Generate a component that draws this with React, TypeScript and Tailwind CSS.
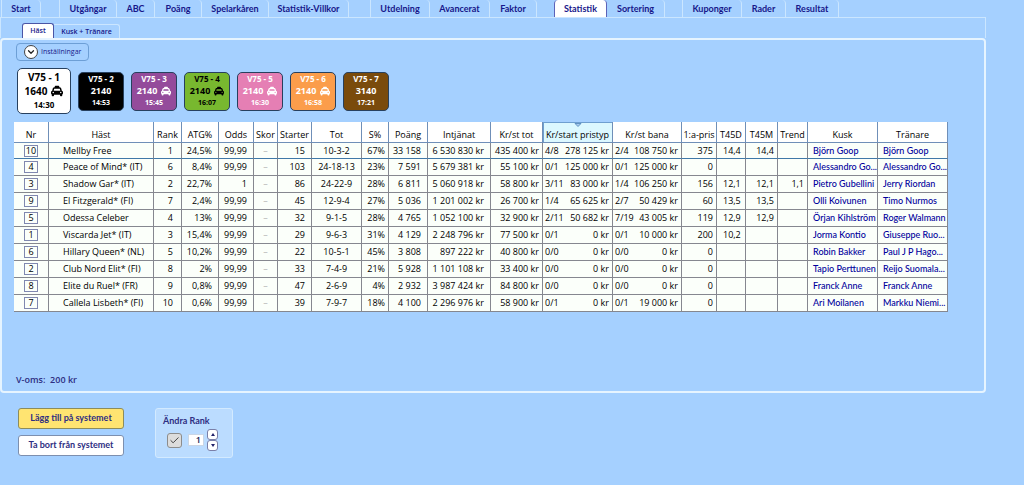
import { useState } from 'react';
import clsx from 'clsx';
import { Check, ChevronDown } from 'lucide-react';
import { FaTaxi } from 'react-icons/fa';

const TAB_GROUPS = [
  { gap: 'ml-px', tabs: [{ label: 'Start', width: 'w-10' }] },
  {
    gap: 'ml-[18px]',
    tabs: [
      { label: 'Utgångar', width: 'w-[58px]' },
      { label: 'ABC', width: 'w-[38px]' },
      { label: 'Poäng', width: 'w-[47px]' },
      { label: 'Spelarkåren', width: 'w-[67px]' },
      { label: 'Statistik-Villkor', width: 'w-20' },
    ],
  },
  {
    gap: 'ml-[21px]',
    tabs: [
      { label: 'Utdelning', width: 'w-[60px]' },
      { label: 'Avancerat', width: 'w-[60px]' },
      { label: 'Faktor', width: 'w-[47px]' },
    ],
  },
  {
    gap: 'ml-[17px]',
    tabs: [
      { label: 'Statistik', width: 'w-[53px]' },
      { label: 'Sortering', width: 'w-[58px]' },
    ],
  },
  {
    gap: 'ml-[17px]',
    tabs: [
      { label: 'Kuponger', width: 'w-[60px]' },
      { label: 'Rader', width: 'w-[44px]' },
      { label: 'Resultat', width: 'w-[53px]' },
    ],
  },
];

const RACES = [
  { name: 'V75 - 1', distance: '1640', auto: true, time: '14:30', style: 'bg-white text-black' },
  { name: 'V75 - 2', distance: '2140', auto: false, time: '14:53', style: 'bg-black text-white' },
  { name: 'V75 - 3', distance: '2140', auto: true, time: '15:45', style: 'bg-[#944b9b] text-white' },
  { name: 'V75 - 4', distance: '2140', auto: true, time: '16:07', style: 'bg-[#78b82f] text-black' },
  { name: 'V75 - 5', distance: '2140', auto: true, time: '16:30', style: 'bg-[#e57fb4] text-white' },
  { name: 'V75 - 6', distance: '2140', auto: true, time: '16:58', style: 'bg-[#fb9d4b] text-white' },
  { name: 'V75 - 7', distance: '3140', auto: false, time: '17:21', style: 'bg-[#7a4b0c] text-white' },
];

const COLUMNS = [
  { title: 'Nr', width: 'w-[35px]' },
  { title: 'Häst', width: 'w-[105px]' },
  { title: 'Rank', width: 'w-[28px]' },
  { title: 'ATG%', width: 'w-[37px]' },
  { title: 'Odds', width: 'w-[35px]' },
  { title: 'Skor', width: 'w-[24px]' },
  { title: 'Starter', width: 'w-[34px]' },
  { title: 'Tot', width: 'w-[50px]' },
  { title: 'S%', width: 'w-[27px]' },
  { title: 'Poäng', width: 'w-[39px]' },
  { title: 'Intjänat', width: 'w-[63px]' },
  { title: 'Kr/st tot', width: 'w-[52px]' },
  { title: 'Kr/start pristyp', width: 'w-[70px]' },
  { title: 'Kr/st bana', width: 'w-[69px]' },
  { title: '1:a-pris', width: 'w-[35px]' },
  { title: 'T45D', width: 'w-[29px]' },
  { title: 'T45M', width: 'w-[32px]' },
  { title: 'Trend', width: 'w-[30px]' },
  { title: 'Kusk', width: 'w-[70px]' },
  { title: 'Tränare', width: 'w-[70px]' },
];

const HORSES = [
  { nr: 10, name: 'Mellby Free', rank: 1, atg: '24,5%', odds: '99,99', starts: 15, tot: '10-3-2', s: '67%', points: '33 158', earned: '6 530 830', perStart: '435 400', type: ['4/8', '278 125'], track: ['2/4', '108 750'], first: 375, t45d: '14,4', t45m: '14,4', trend: '', driver: 'Björn Goop', trainer: 'Björn Goop' },
  { nr: 4, name: 'Peace of Mind* (IT)', rank: 6, atg: '8,4%', odds: '99,99', starts: 103, tot: '24-18-13', s: '23%', points: '7 591', earned: '5 679 381', perStart: '55 100', type: ['0/1', '125 000'], track: ['0/1', '125 000'], first: 0, t45d: '', t45m: '', trend: '', driver: 'Alessandro Go...', trainer: 'Alessandro Go...' },
  { nr: 3, name: 'Shadow Gar* (IT)', rank: 2, atg: '22,7%', odds: '1', starts: 86, tot: '24-22-9', s: '28%', points: '6 811', earned: '5 060 918', perStart: '58 800', type: ['3/11', '83 000'], track: ['1/4', '106 250'], first: 156, t45d: '12,1', t45m: '12,1', trend: '1,1', driver: 'Pietro Gubellini', trainer: 'Jerry Riordan' },
  { nr: 9, name: 'El Fitzgerald* (FI)', rank: 7, atg: '2,4%', odds: '99,99', starts: 45, tot: '12-9-4', s: '27%', points: '5 036', earned: '1 201 002', perStart: '26 700', type: ['1/4', '65 625'], track: ['2/7', '50 429'], first: 60, t45d: '13,5', t45m: '13,5', trend: '', driver: 'Olli Koivunen', trainer: 'Timo Nurmos' },
  { nr: 5, name: 'Odessa Celeber', rank: 4, atg: '13%', odds: '99,99', starts: 32, tot: '9-1-5', s: '28%', points: '4 765', earned: '1 052 100', perStart: '32 900', type: ['2/11', '50 682'], track: ['7/19', '43 005'], first: 119, t45d: '12,9', t45m: '12,9', trend: '', driver: 'Örjan Kihlström', trainer: 'Roger Walmann' },
  { nr: 1, name: 'Viscarda Jet* (IT)', rank: 3, atg: '15,4%', odds: '99,99', starts: 29, tot: '9-6-3', s: '31%', points: '4 129', earned: '2 248 796', perStart: '77 500', type: ['0/1', '0'], track: ['0/1', '10 000'], first: 200, t45d: '10,2', t45m: '', trend: '', driver: 'Jorma Kontio', trainer: 'Giuseppe Ruo...' },
  { nr: 6, name: 'Hillary Queen* (NL)', rank: 5, atg: '10,2%', odds: '99,99', starts: 22, tot: '10-5-1', s: '45%', points: '3 808', earned: '897 222', perStart: '40 800', type: ['0/0', '0'], track: ['0/0', '0'], first: 0, t45d: '', t45m: '', trend: '', driver: 'Robin Bakker', trainer: 'Paul J P Hago...' },
  { nr: 2, name: 'Club Nord Elit* (FI)', rank: 8, atg: '2%', odds: '99,99', starts: 33, tot: '7-4-9', s: '21%', points: '5 928', earned: '1 101 108', perStart: '33 400', type: ['0/0', '0'], track: ['0/0', '0'], first: 0, t45d: '', t45m: '', trend: '', driver: 'Tapio Perttunen', trainer: 'Reijo Suomala...' },
  { nr: 8, name: 'Elite du Ruel* (FR)', rank: 9, atg: '0,8%', odds: '99,99', starts: 47, tot: '2-6-9', s: '4%', points: '2 932', earned: '3 987 424', perStart: '84 800', type: ['0/0', '0'], track: ['0/0', '0'], first: 0, t45d: '', t45m: '', trend: '', driver: 'Franck Anne', trainer: 'Franck Anne' },
  { nr: 7, name: 'Callela Lisbeth* (FI)', rank: 10, atg: '0,6%', odds: '99,99', starts: 39, tot: '7-9-7', s: '18%', points: '4 100', earned: '2 296 976', perStart: '58 900', type: ['0/1', '0'], track: ['0/1', '19 000'], first: 0, t45d: '', t45m: '', trend: '', driver: 'Ari Moilanen', trainer: 'Markku Niemi...' },
];

function MainTabs() {
  const [active, setActive] = useState('Statistik');
  return (
    <nav className="flex h-[17px] font-['Lato',sans-serif]">
      {TAB_GROUPS.map((group) => (
        <div key={group.tabs[0].label} className={clsx('flex', group.gap)}>
          {group.tabs.map((tab) => (
            <button
              key={tab.label}
              type="button"
              onClick={() => setActive(tab.label)}
              className={clsx(
                'rounded-tr-sm border-r text-center text-[9px] leading-4 font-bold whitespace-nowrap text-[#17178a]',
                tab.width,
                tab.label === active ? 'rounded-tl-sm border-l border-[#5b62b8] bg-white' : 'border-[#cbe6ff] first:border-l',
              )}
            >
              {tab.label}
            </button>
          ))}
        </div>
      ))}
    </nav>
  );
}

function RaceButton({ race, active, onSelect }: { race: (typeof RACES)[number]; active: boolean; onSelect: () => void }) {
  return (
    <button
      type="button"
      onClick={onSelect}
      className={clsx(
        'flex flex-col items-center justify-center rounded-[5px] border border-[#27405e] font-bold',
        active ? 'h-[46px] w-[54px] text-[10px] leading-[14px]' : 'h-[39px] w-[46px] text-[8px] leading-3',
        race.style,
      )}
    >
      <span>{race.name}</span>
      <span className={clsx('flex items-center gap-1', !active && 'text-[9px]')}>
        {race.distance}
        {race.auto ? <FaTaxi className={active ? 'size-3' : 'size-[10px]'} /> : null}
      </span>
      <span className={active ? 'text-[8px]' : 'text-[7px]'}>{race.time}</span>
    </button>
  );
}

function SplitCell({ parts }: { parts: string[] }) {
  return (
    <td className="pr-[3px] pl-0.5">
      <div className="flex justify-between">
        <span>{parts[0]}</span>
        <span>{parts[1]} kr</span>
      </div>
    </td>
  );
}

function HorseTable() {
  return (
    <table className="w-full table-fixed border-separate border-spacing-0 bg-[#fbfffa] text-[9px] leading-3 font-medium whitespace-nowrap text-black [&_td]:border-r [&_td]:border-b [&_td]:border-[#85878f] [&_th]:border-r">
      <colgroup>
        {COLUMNS.map((col) => (
          <col key={col.title} className={col.width} />
        ))}
      </colgroup>
      <thead>
        <tr className="h-[21px]">
          {COLUMNS.map((col) => (
            <th
              key={col.title}
              scope="col"
              className={clsx(
                'relative border-b border-[#6f8fb8] p-0 pt-[6px] text-center font-medium',
                col.title === 'Kr/start pristyp' ? 'bg-[#dcf8ff] shadow-[inset_1px_1px_#6f9fd0]' : 'bg-white',
              )}
            >
              {col.title}
              {col.title === 'Kr/start pristyp' ? (
                <svg viewBox="0 0 8 4" className="absolute top-px left-1/2 h-1 w-2 -translate-x-1/2" aria-hidden="true">
                  <path d="M1 0.5h6L4 3.5z" fill="#a9cdf0" stroke="#4a7fb5" strokeWidth="0.8" />
                </svg>
              ) : null}
            </th>
          ))}
        </tr>
      </thead>
      <tbody>
        {HORSES.map((h) => (
          <tr key={h.nr} className="h-[17px] first:h-4 [&_td]:py-0 [&:first-child>td]:border-b-[#3f78a8]">
            <td>
              <div className="mx-auto h-3 w-[14px] border border-[#8088b0] text-center leading-[10px]">{h.nr}</div>
            </td>
            <td className="pl-[14px]">{h.name}</td>
            <td className="pr-2 text-right">{h.rank}</td>
            <td className="pr-[6px] text-right">{h.atg}</td>
            <td className="pr-[6px] text-right">{h.odds}</td>
            <td className="text-center text-[#b5b5b5]">–</td>
            <td className="pr-[6px] text-right">{h.starts}</td>
            <td className="text-center">{h.tot}</td>
            <td className="pr-[3px] text-right">{h.s}</td>
            <td className="pr-[6px] text-right">{h.points}</td>
            <td className="pr-[6px] text-right">{h.earned} kr</td>
            <td className="pr-[3px] text-right">{h.perStart} kr</td>
            <SplitCell parts={h.type} />
            <SplitCell parts={h.track} />
            <td className="pr-[3px] text-right">{h.first}</td>
            <td className="pl-[6px]">{h.t45d}</td>
            <td className="pr-[3px] text-right">{h.t45m}</td>
            <td className="pr-[3px] text-right">{h.trend}</td>
            <td className="pl-[5px] font-['Lato',sans-serif] text-[#00009c]">{h.driver}</td>
            <td className="pl-[5px] font-['Lato',sans-serif] text-[#00009c]">{h.trainer}</td>
          </tr>
        ))}
      </tbody>
    </table>
  );
}

function RankEditor() {
  const [rank, setRank] = useState(1);
  const [locked, setLocked] = useState(true);
  return (
    <section className="h-[50px] w-[78px] rounded-[3px] border border-[#d3eaff] bg-[#bbdcff] px-[7px] pt-1">
      <label htmlFor="rank" className="block font-['Lato',sans-serif] text-[9px] leading-4 font-bold text-[#2e2e82]">
        Ändra Rank
      </label>
      <div className="flex items-center pl-1">
        <span className="relative size-[15px]">
          <input
            type="checkbox"
            aria-label="Ändra Rank"
            checked={locked}
            onChange={(e) => setLocked(e.target.checked)}
            className="block size-[15px] appearance-none rounded-[3px] border border-[#8c8c8c] bg-[#dcdcdc]"
          />
          {locked ? <Check className="pointer-events-none absolute top-0.5 left-0.5 size-[11px] text-[#333]" /> : null}
        </span>
        <input
          id="rank"
          type="text"
          value={rank}
          onChange={(e) => setRank(Number(e.target.value) || 1)}
          className="ml-[6px] h-3 w-4 border border-[#c9d6e6] bg-white pr-0.5 text-right text-[9px] font-semibold text-[#222255]"
        />
        <div className="ml-[3px] flex flex-col">
          <button type="button" aria-label="Öka" onClick={() => setRank(rank + 1)} className="grid size-[11px] place-items-center rounded-[3px] border border-[#7a7fa8] bg-white">
            <svg viewBox="0 0 4 3" className="h-[3px] w-1"><path d="M0 3l2-3 2 3z" fill="#22226a" /></svg>
          </button>
          <button type="button" aria-label="Minska" onClick={() => setRank(Math.max(1, rank - 1))} className="grid size-[11px] place-items-center rounded-[3px] border border-[#7a7fa8] bg-white">
            <svg viewBox="0 0 4 3" className="h-[3px] w-1"><path d="M0 0l2 3 2-3z" fill="#22226a" /></svg>
          </button>
        </div>
      </div>
    </section>
  );
}

export default function App() {
  const [race, setRace] = useState('V75 - 1');
  return (
    <div className="min-h-screen bg-[#a5d0ff] pr-[38px] font-['Open_Sans',sans-serif]">
      <MainTabs />
      <div className="flex h-[21px] items-end border-t border-r border-l border-[#cbe6ff] pl-[21px]">
        <button type="button" className="h-[15px] w-8 rounded-t-[3px] border border-b-0 border-[#4a55a5] bg-white text-[7px] leading-3 font-semibold text-[#17178a]">
          Häst
        </button>
        <button type="button" className="h-[14px] w-[66px] rounded-tr-[3px] border-t border-r border-[#cbe6ff] text-[7px] leading-3 font-semibold whitespace-nowrap text-[#17178a]">
          Kusk + Tränare
        </button>
      </div>
      <main className="flex min-h-[355px] flex-col rounded-sm border-2 border-[#e6f4ff] pt-[3px]">
        <button type="button" className="ml-[14px] flex h-[18px] w-[73px] items-center gap-[3px] rounded-sm border border-[#6d9fd6] pl-[7px] text-[7px] font-medium text-[#17178a]">
          <span className="grid size-[14px] place-items-center rounded-full border border-[#444] bg-white">
            <ChevronDown className="size-[10px] stroke-[3] text-[#222]" />
          </span>
          Inställningar
        </button>
        <div className="mt-[7px] flex items-center gap-[7px] pl-[15px]">
          {RACES.map((r) => (
            <RaceButton key={r.name} race={r} active={r.name === race} onSelect={() => setRace(r.name)} />
          ))}
        </div>
        <div className="mt-2 pr-9 pl-3">
          <HorseTable />
        </div>
        <p className="mt-auto pb-[5px] pl-[14px] text-[9px] leading-3 font-semibold whitespace-pre text-[#2e2e82]">V-oms:  200 kr</p>
      </main>
      <footer className="flex items-start gap-[31px] pt-[15px] pl-[18px]">
        <div className="flex flex-col gap-[6px] font-['Lato',sans-serif] text-[9px] font-bold text-[#2e2e82]">
          <button type="button" className="h-[21px] w-[106px] rounded-[3px] border border-[#8c8c5c] bg-[#ffe471] pb-0.5">
            Lägg till på systemet
          </button>
          <button type="button" className="h-[21px] w-[106px] rounded-[3px] border border-[#7d8fae] bg-white pb-0.5">
            Ta bort från systemet
          </button>
        </div>
        <RankEditor />
      </footer>
    </div>
  );
}
